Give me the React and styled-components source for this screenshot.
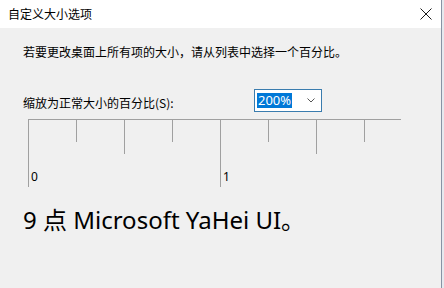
import React from "react";
import styled, { createGlobalStyle } from "styled-components";

const GlobalStyle = createGlobalStyle`
  html, body {
    margin: 0;
    padding: 0;
    background: #e6e9ee;
  }
  * {
    box-sizing: border-box;
  }
`;

const Dialog = styled.div`
  width: 442px;
  height: 288px;
  display: flex;
  flex-direction: column;
  background: #f0f0f0;
  border-right: 1px solid #8893a4;
  font-family: "Noto Sans CJK SC", "Noto Sans", sans-serif;
  color: #000;
  overflow: hidden;
`;

const TitleBar = styled.div`
  height: 28px;
  flex: none;
  display: flex;
  align-items: center;
  justify-content: space-between;
  padding: 0 9px 0 8px;
  background: #ffffff;
  font-size: 12px;
  line-height: 16px;
`;

const CloseButton = styled.div`
  width: 12px;
  height: 12px;
  display: flex;
  margin-top: -1px;
`;

const Body = styled.div`
  display: flex;
  flex-direction: column;
  padding-left: 23px;
`;

const Intro = styled.div`
  margin-top: 16px;
  font-size: 12px;
  line-height: 16px;
`;

const ScaleRow = styled.div`
  margin-top: 29px;
  height: 23px;
  display: flex;
  align-items: center;
`;

const ScaleLabel = styled.div`
  width: 231px;
  font-size: 12px;
  line-height: 16px;
  margin-top: 4px;
`;

const Combo = styled.div`
  width: 68px;
  height: 23px;
  display: flex;
  align-items: center;
  justify-content: space-between;
  padding: 0 6px 0 2px;
  background: #ffffff;
  border: 1px solid #3a7cae;
`;

const Selected = styled.span`
  font-family: "Noto Sans", sans-serif;
  font-size: 13px;
  line-height: 15px;
  padding: 0 1px;
  background: #0078d7;
  color: #ffffff;
`;

const Ruler = styled.div`
  margin: 7px 0 0 5px;
  width: 373px;
  display: flex;
  align-items: flex-start;
  border-top: 1px solid #a0a0a0;
  overflow: hidden;
`;

const Tick = styled.div`
  flex: 0 0 48px;
  height: ${(p) => p.$h}px;
  border-left: 1px solid #a0a0a0;
  display: flex;
  flex-direction: column;
  justify-content: flex-end;
  padding: 0 0 3px 2px;
`;

const TickLabel = styled.span`
  font-family: "Noto Sans", sans-serif;
  font-size: 12px;
  line-height: 14px;
  color: #000;
`;

const Sample = styled.div`
  margin-top: 16px;
  font-family: "Noto Sans", "Noto Sans CJK SC", sans-serif;
  font-size: 24px;
  line-height: 34px;
`;

const ticks = [
  { h: 67, label: "0" },
  { h: 22 },
  { h: 34 },
  { h: 22 },
  { h: 67, label: "1" },
  { h: 22 },
  { h: 34 },
  { h: 22 },
];

const App = () => {
  return (
    <>
      <GlobalStyle />
      <Dialog>
        <TitleBar>
          <span>自定义大小选项</span>
          <CloseButton>
            <svg width="12" height="12" viewBox="0 0 12 12">
              <path d="M0.5 0.5 L11.5 11.5 M11.5 0.5 L0.5 11.5" stroke="#1a1a1a" strokeWidth="1" fill="none" />
            </svg>
          </CloseButton>
        </TitleBar>
        <Body>
          <Intro>若要更改桌面上所有项的大小，请从列表中选择一个百分比。</Intro>
          <ScaleRow>
            <ScaleLabel>缩放为正常大小的百分比(S):</ScaleLabel>
            <Combo>
              <Selected>200%</Selected>
              <svg width="8" height="5" viewBox="0 0 8 5">
                <path d="M0.5 0.5 L4 4 L7.5 0.5" stroke="#555" strokeWidth="1" fill="none" />
              </svg>
            </Combo>
          </ScaleRow>
          <Ruler>
            {ticks.map((t, i) => (
              <Tick key={i} $h={t.h}>
                {t.label && <TickLabel>{t.label}</TickLabel>}
              </Tick>
            ))}
          </Ruler>
          <Sample>9 点 Microsoft YaHei UI。</Sample>
        </Body>
      </Dialog>
    </>
  );
};

export default App;
